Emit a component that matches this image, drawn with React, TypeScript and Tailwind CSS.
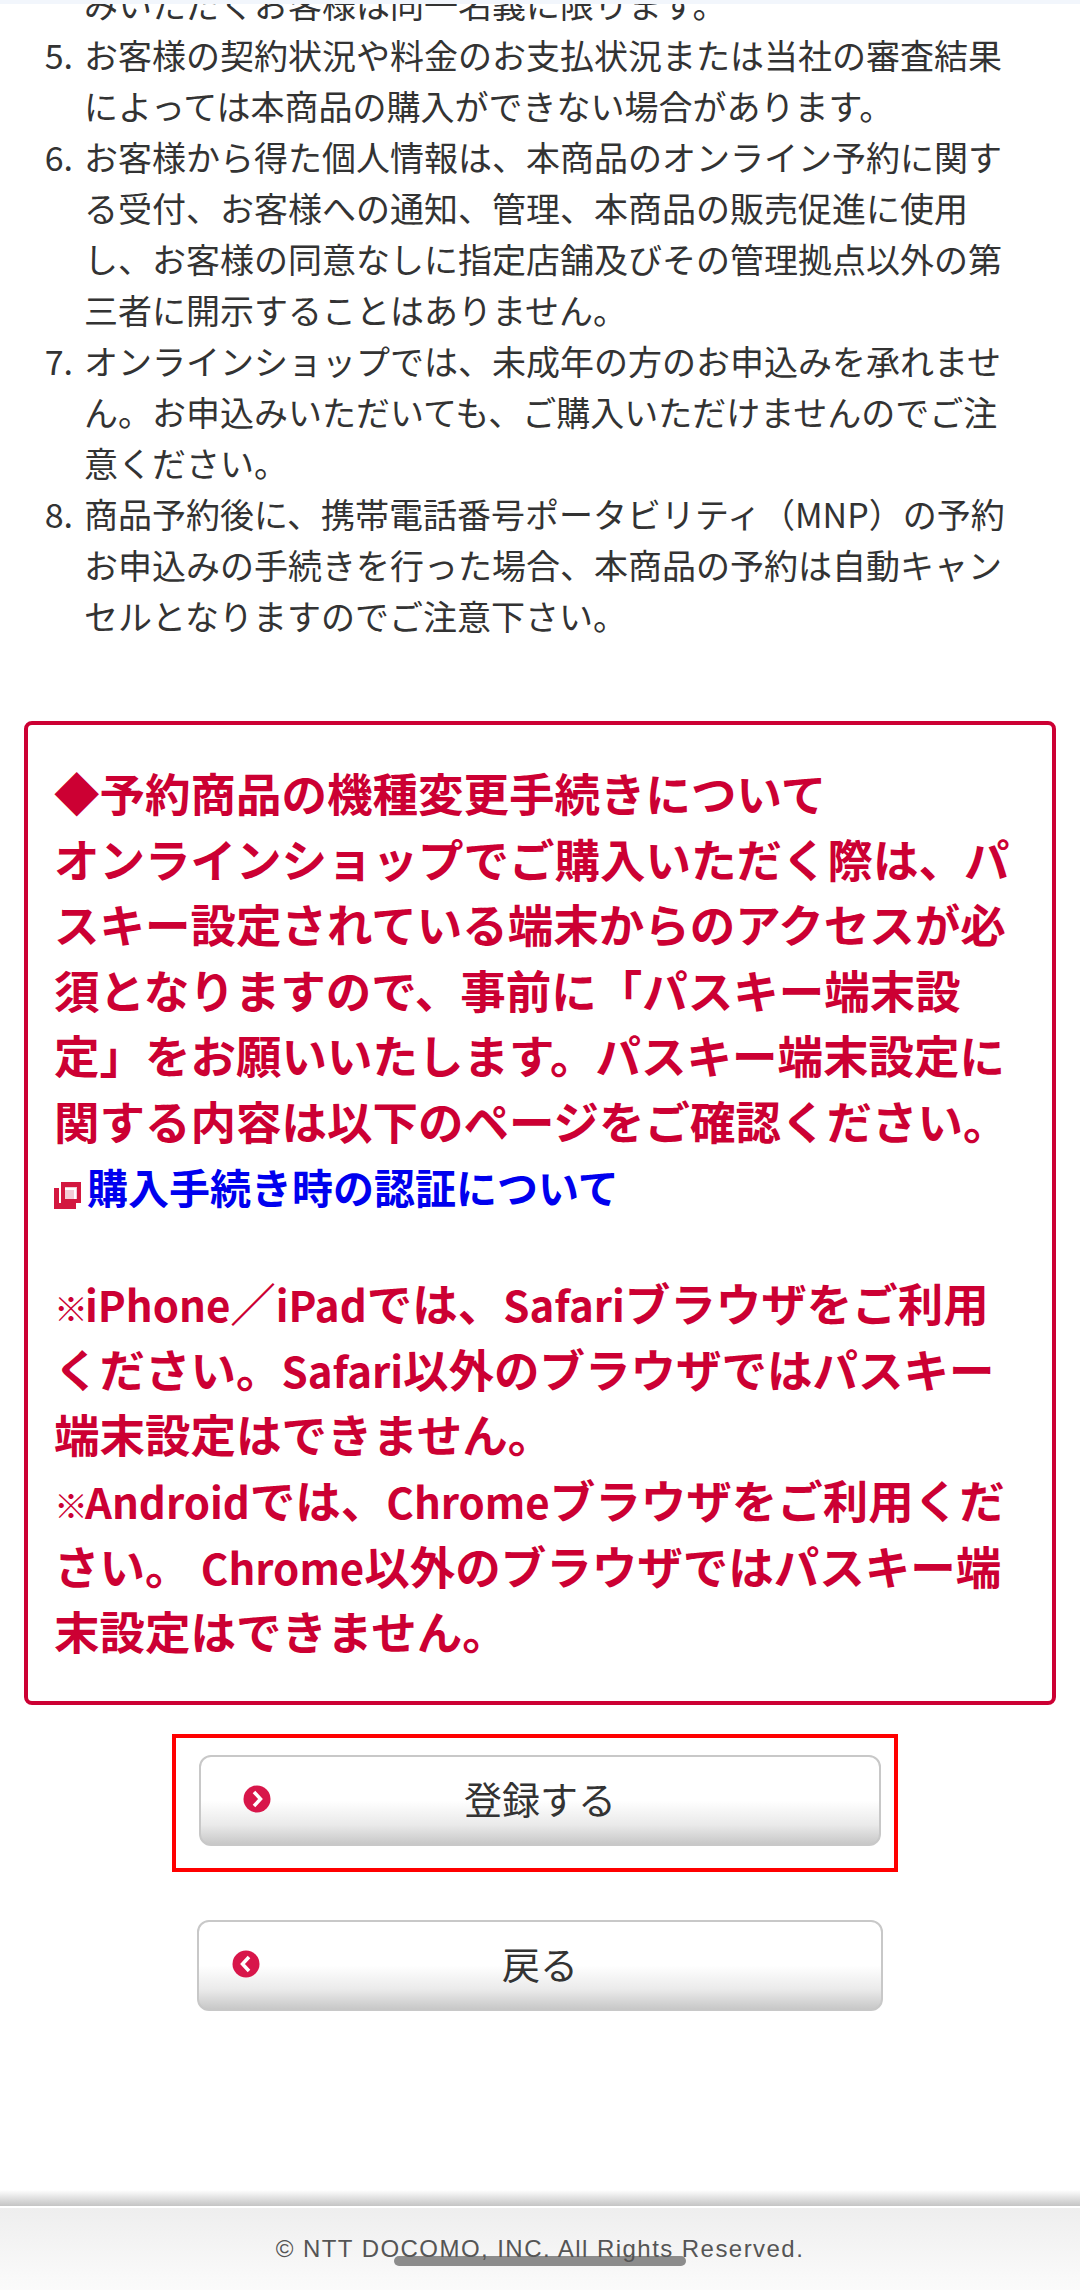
import React from 'react';

const jp = 'font-["Noto_Sans_CJK_JP","Liberation_Sans",sans-serif]';

const notes = [
    { n: 0, text: 'みいただくお客様は同一名義に限ります。' },
    { n: 5, text: 'お客様の契約状況や料金のお支払状況または当社の審査結果によっては本商品の購入ができない場合があります。' },
    { n: 6, text: 'お客様から得た個人情報は、本商品のオンライン予約に関する受付、お客様への通知、管理、本商品の販売促進に使用し、お客様の同意なしに指定店舗及びその管理拠点以外の第三者に開示することはありません。' },
    { n: 7, text: 'オンラインショップでは、未成年の方のお申込みを承れません。お申込みいただいても、ご購入いただけませんのでご注意ください。' },
    { n: 8, text: '商品予約後に、携帯電話番号ポータビリティ（MNP）の予約お申込みの手続きを行った場合、本商品の予約は自動キャンセルとなりますのでご注意下さい。' },
];

const ArrowBadge: React.FC<{ back?: boolean }> = ({ back }) => (
    <svg width="28" height="28" viewBox="0 0 28 28" className="shrink-0">
        <circle cx="14" cy="14" r="13.5" fill="#d8164a" />
        <path d={back ? 'M17 7 L10.5 14 L17 21' : 'M11 7 L17.5 14 L11 21'} fill="none" stroke="#fff" strokeWidth="3.5" />
    </svg>
);

const PillButton: React.FC<{ label: string; back?: boolean; className?: string; iconClass: string }> = ({ label, back, className, iconClass }) => (
    <button className={`relative flex h-[91px] items-center justify-center rounded-[12px] border-2 border-[#c8c8c8] bg-gradient-to-b from-white from-50% via-[#eaeaea] via-[78%] to-[#c8c8c8] pb-[6px] text-[38px] text-[#333] ${className}`}>
        <span className={`absolute top-[28px] ${iconClass}`}>
            <ArrowBadge back={back} />
        </span>
        {label}
    </button>
);

const Latin: React.FC<{ children: React.ReactNode }> = ({ children }) => <span className="text-[42px] leading-[0]">{children}</span>;

const Mark = () => <span className="text-[34px] leading-[0] tracking-[-3px]">※</span>;

export default function App() {
    return (
        <div className={`relative flex h-[2290px] w-[1080px] flex-col overflow-hidden bg-white ${jp}`}>
            <div className="absolute inset-x-0 top-0 z-10 h-[4px] bg-[#f2f6fc]" />

            <ol className="mt-[-22px] pl-[84px] pr-[66px] text-[34px] leading-[51px] text-[#333]">
                {notes.map((item) => (
                    <li key={item.n} className="relative">
                        {item.n > 0 && <span className="absolute right-full mr-[11px] whitespace-nowrap">{item.n}.</span>}
                        {item.text}
                    </li>
                ))}
            </ol>

            <div className="mx-[24px] mt-[80px] h-[984px] rounded-[8px] border-[4px] border-[#cc0033] pl-[26px] pr-[26px] pt-[35px] text-[45.5px] font-bold leading-[65.6px] text-[#cc0033]">
                <p>◆予約商品の機種変更手続きについて</p>
                <p>オンラインショップでご購入いただく際は、パスキー設定されている端末からのアクセスが必須となりますので、事前に「パスキー端末設定」をお願いいたします。パスキー端末設定に関する内容は以下のページをご確認ください。</p>
                <p className="flex items-center">
                    <svg width="27" height="27" viewBox="0 0 27 27" className="mr-[6px] mt-[18px] shrink-0">
                        <path d="M0 6 H5 V21 H22 V27 H0 Z" fill="#d3173f" />
                        <path fillRule="evenodd" d="M7 0 H27 V21 H7 Z M11 5 V17 H23 V5 Z" fill="#d3173f" />
                        <rect x="11" y="5" width="12" height="12" fill="#f4ccd6" />
                        <path d="M11 7 H21 V17" fill="none" stroke="#fff" strokeWidth="2" />
                    </svg>
                    <span className="text-[41px] text-[#0000ee]">購入手続き時の認証について</span>
                </p>
                <p className="h-[51px]" />
                <p><Mark /><Latin>iPhone</Latin>／<Latin>iPad</Latin>では、<Latin>Safari</Latin>ブラウザをご利用ください。<Latin>Safari</Latin>以外のブラウザではパスキー端末設定はできません。</p>
                <p><Mark /><Latin>Android</Latin>では、<Latin>Chrome</Latin>ブラウザをご利用ください。 <Latin>Chrome</Latin>以外のブラウザではパスキー端末設定はできません。</p>
            </div>

            <div className="ml-[172px] mt-[29px] flex h-[138px] w-[726px] flex-col border-[4px] border-[#ff0000] pl-[23px] pt-[17px]">
                <PillButton label="登録する" className="w-[682px]" iconClass="left-[42px]" />
            </div>

            <PillButton label="戻る" back className="ml-[197px] mt-[48px] w-[686px]" iconClass="left-[33px]" />

            <div className="mt-auto">
                <div className="h-[16px] bg-gradient-to-b from-white to-[#c4c4c4]" />
                <div className="h-[2px] bg-white" />
                <div className="relative flex h-[82px] items-center justify-center bg-gradient-to-b from-[#eeeeee] to-[#fbfbfb] font-['Liberation_Sans',sans-serif] text-[24px] tracking-[1.45px] text-[#555]">
                    <div className="absolute left-[394px] top-[48px] h-[10px] w-[292px] rounded-full bg-[#8c8c8c]" />
                    <span className="relative">© NTT DOCOMO, INC. All Rights Reserved.</span>
                </div>
            </div>
        </div>
    );
}
